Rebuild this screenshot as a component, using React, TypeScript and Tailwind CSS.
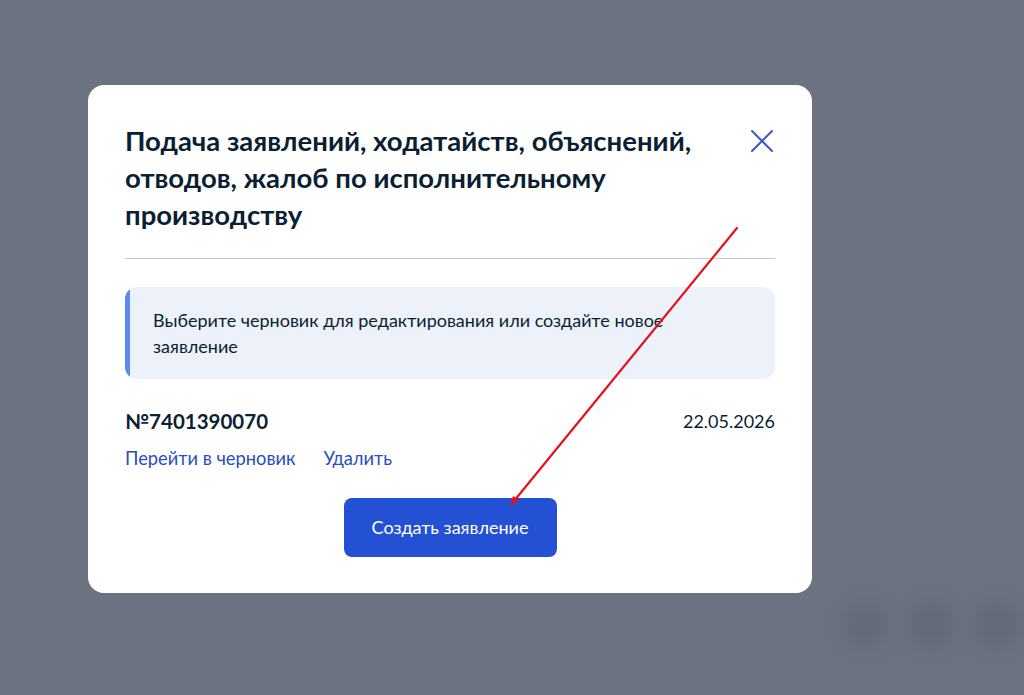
import React from "react";

export default function App() {
  return (
    <div
      className="relative w-[1024px] h-[695px] overflow-hidden bg-[#6b7280]"
      style={{ fontFamily: "Lato, 'Noto Sans', sans-serif" }}
    >
      {/* blurred background circles */}
      <div className="absolute left-[842px] top-[602px] flex gap-[20px] blur-[8px]">
        <div className="w-[46px] h-[46px] rounded-full bg-[#646b78]" />
        <div className="w-[46px] h-[46px] rounded-full bg-[#636a77]" />
        <div className="w-[46px] h-[46px] rounded-full bg-[#636a77]" />
      </div>

      <div className="absolute left-[88px] top-[85px] w-[724px] rounded-[16px] bg-white px-[37px] pt-[37px] pb-[36px]">
        <div className="flex items-start justify-between">
          <h1 className="w-[600px] text-[27.5px] leading-[37px] font-bold text-[#0b1f33]">
            Подача заявлений, ходатайств, объяснений, отводов, жалоб по исполнительному производству
          </h1>
          <button className="mt-[8px] mr-[2px] w-[22px] h-[22px] flex items-center justify-center">
            <svg width="22" height="22" viewBox="0 0 22 22" fill="none">
              <path d="M1 1L21 21M21 1L1 21" stroke="#3a5ac6" strokeWidth="2" strokeLinecap="round" />
            </svg>
          </button>
        </div>

        <div className="mt-[25px] h-px bg-[#c6cad6]" />

        <div className="mt-[28px] flex rounded-[12px] bg-[#ecf1fa] overflow-hidden">
          <div className="w-[5px] shrink-0 bg-[#5b8bef] rounded-l-[12px]" />
          <div className="pl-[23px] pr-[60px] py-[20px] text-[18px] leading-[26px] text-[#0b1f33]">
            Выберите черновик для редактирования или создайте новое заявление
          </div>
        </div>

        <div className="mt-[28px] flex items-center justify-between">
          <div className="text-[20.5px] leading-[28px] font-bold text-[#0b1f33]">№7401390070</div>
          <div className="text-[18px] leading-[28px] text-[#0b1f33]">22.05.2026</div>
        </div>

        <div className="mt-[11px] flex gap-[28px] text-[18.3px] leading-[24px] text-[#2a4cc4]">
          <span>Перейти в черновик</span>
          <span>Удалить</span>
        </div>

        <div className="mt-[28px] flex justify-center">
          <button className="w-[213px] h-[59px] rounded-[8px] bg-[#2451d4] text-white text-[18px]">
            Создать заявление
          </button>
        </div>
      </div>

      {/* red annotation arrow */}
      <svg className="absolute left-0 top-0" width="1024" height="695" viewBox="0 0 1024 695" fill="none">
        <line x1="737" y1="228" x2="514" y2="501" stroke="#e8111a" strokeWidth="2.2" strokeLinecap="round" />
        <path d="M510 506 L513 496 L519 500 Z" fill="#e8111a" />
      </svg>
    </div>
  );
}
